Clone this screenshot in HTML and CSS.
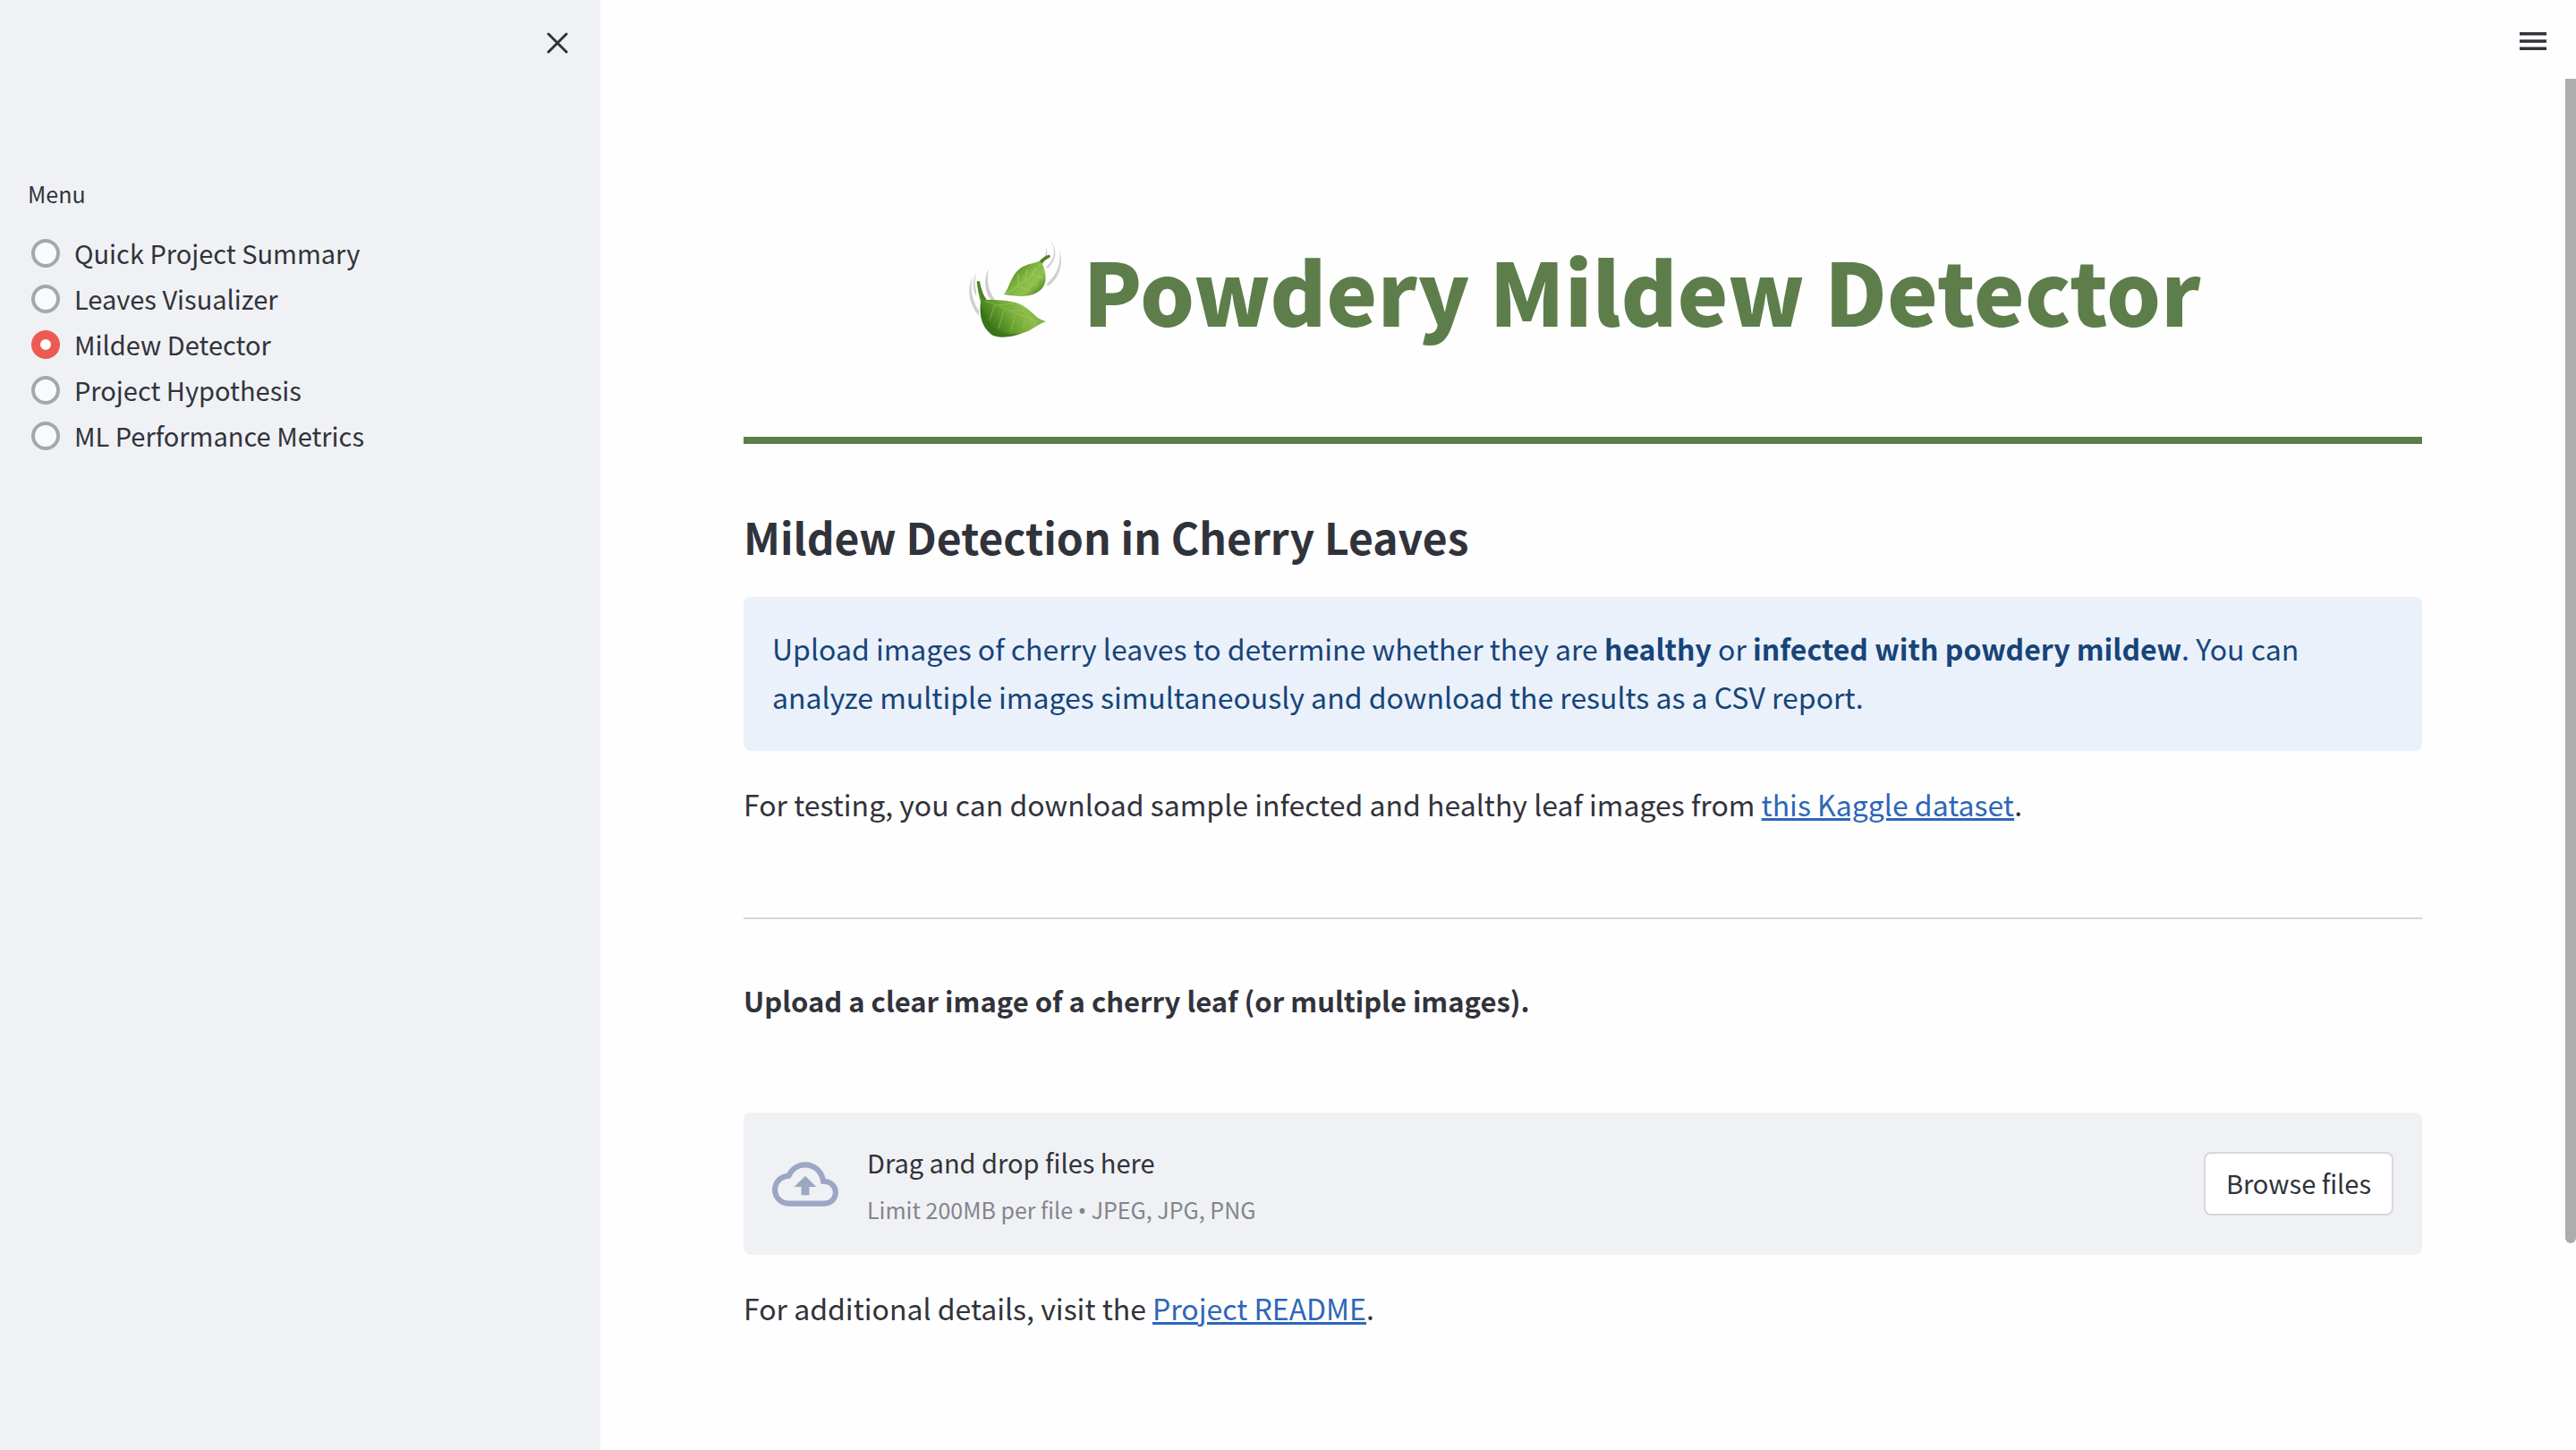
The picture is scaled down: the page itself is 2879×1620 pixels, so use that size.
FILE: index.html
```html
<!DOCTYPE html>
<html lang="en">
<head>
<meta charset="utf-8">
<title>Powdery Mildew Detector</title>
<link rel="stylesheet" href="styles.css">
</head>
<body>
<div class="app">
  <aside class="sidebar">
    <div class="sidebar-head">
      <button class="icon-button" type="button" aria-label="Close sidebar">
        <svg class="icon-close" viewBox="0 0 24 24" fill="none" stroke="currentColor" stroke-width="3" stroke-linecap="round"><path d="M2 2l20 20M22 2L2 22"/></svg>
      </button>
    </div>
    <fieldset class="menu">
      <legend class="menu-title">Menu</legend>
      <label class="option"><input class="radio" type="radio" name="page">Quick Project Summary</label>
      <label class="option"><input class="radio" type="radio" name="page">Leaves Visualizer</label>
      <label class="option"><input class="radio" type="radio" name="page" checked>Mildew Detector</label>
      <label class="option"><input class="radio" type="radio" name="page">Project Hypothesis</label>
      <label class="option"><input class="radio" type="radio" name="page">ML Performance Metrics</label>
    </fieldset>
  </aside>
  <div class="page">
    <header class="topbar">
      <button class="icon-button" type="button" aria-label="Main menu">
        <svg class="icon-menu" viewBox="0 0 30 20" fill="currentColor"><path d="M0 0h30v3.4H0zM0 8.3h30v3.4H0zM0 16.6h30V20H0z"/></svg>
      </button>
    </header>
    <main class="content">
      <h1 class="title">
        <svg class="leaf" viewBox="0 0 160 150" aria-hidden="true">
          <defs>
            <linearGradient id="leafLow" x1="0.1" y1="0.6" x2="0.8" y2="0.2">
              <stop offset="0" stop-color="#3f7a1c"/><stop offset="0.4" stop-color="#72a936"/><stop offset="0.7" stop-color="#8fbe4d"/><stop offset="1" stop-color="#5d9a2b"/>
            </linearGradient>
            <linearGradient id="leafHigh" x1="0.1" y1="0.1" x2="0.9" y2="0.8">
              <stop offset="0" stop-color="#36701a"/><stop offset="0.5" stop-color="#80b53f"/><stop offset="0.75" stop-color="#92c14e"/><stop offset="1" stop-color="#4a8722"/>
            </linearGradient>
          </defs>
          <g fill="#cfcfcf">
            <path d="M29 60C22 74 25 91 36 104L36 98C28 86 26 73 29 60z"/>
            <path d="M34 54C28 64 29 74 33 82L33 76C31 69 31 61 34 54z"/>
            <path d="M47 51C40 64 43 78 50 87L54 86C47 76 44 65 47 51z"/>
            <path d="M116 20C123 31 120 43 110 50L114 50C124 40 123 28 116 20z"/>
            <path d="M126 30C129 45 123 58 112 68L113 71C127 61 131 44 126 30z"/>
            <path d="M111 26C112 33 110 38 107 42L109 42C113 37 113 31 111 26z"/>
          </g>
          <path d="M64 80C70 73 72 58 82 51C90 45 98 46 105 42C108 39 112 37 116 36L116 38C112 40 109 43 107 46C111 54 113 67 106 74C95 85 78 82 64 80z" fill="url(#leafHigh)"/>
          <path d="M66 79C80 72 94 62 106 45M80 69L80 57M87 65L90 52M94 59L99 50M80 71L94 76M88 65L103 71M95 58L109 62" fill="none" stroke="#a5cc62" stroke-width="1.2" opacity="0.7"/>
          <path d="M34 65L37 65C38 73 41 83 45 86C68 86 80 88 89 95C97 101 103 109 111 110C102 113 96 120 85 123C73 128 56 130 49 124C40 116 36 105 38 88C36 80 34 73 34 65z" fill="url(#leafLow)"/>
          <path d="M42 87C60 91 78 105 108 111M54 91L48 108M64 97L58 118M76 103L72 121M88 107L86 118M58 92L75 90M70 98L87 98" fill="none" stroke="#a8cd63" stroke-width="1.2" opacity="0.45"/>
          <path d="M38 91C37 107 41 117 50 124C57 129 72 128 84 123C63 127 45 119 38 91z" fill="#356b18" opacity="0.55"/>
          <path d="M35 66C37 74 39 81 43 86M105 44C108 40 112 38 115 37" fill="none" stroke="#4d7d24" stroke-width="3"/>
        </svg>
        <span>Powdery Mildew Detector</span>
      </h1>
      <hr class="rule-thick">
      <h2 class="heading">Mildew Detection in Cherry Leaves</h2>
      <div class="info">
        <p class="text">Upload images of cherry leaves to determine whether they are <strong>healthy</strong> or <strong>infected with powdery mildew</strong>. You can analyze multiple images simultaneously and download the results as a CSV report.</p>
      </div>
      <p class="text">For testing, you can download sample infected and healthy leaf images from <a href="#dataset">this Kaggle dataset</a>.</p>
      <hr class="rule">
      <p class="prompt" id="upload-label">Upload a clear image of a cherry leaf (or multiple images).</p>
      <section class="uploader" aria-labelledby="upload-label">
        <svg class="icon-cloud" viewBox="0 4 24 16" fill="currentColor"><path d="M19.35 10.04A7.49 7.49 0 0012 4C9.11 4 6.6 5.64 5.35 8.04A5.994 5.994 0 000 14c0 3.31 2.69 6 6 6h13c2.76 0 5-2.24 5-5 0-2.64-2.05-4.78-4.65-4.96zM19 18H6c-2.21 0-4-1.79-4-4 0-2.05 1.53-3.76 3.56-3.97l1.07-.11.5-.95A5.469 5.469 0 0112 6c2.62 0 4.88 1.86 5.39 4.43l.3 1.5 1.53.11A2.98 2.98 0 0122 15c0 1.65-1.35 3-3 3zM8 13h2.55v3h2.9v-3H16l-4-4-4 4z"/></svg>
        <div class="drop">
          <span class="drop-title">Drag and drop files here</span>
          <span class="drop-hint">Limit 200MB per file <span class="bullet">•</span> JPEG, JPG, PNG</span>
        </div>
        <button class="browse" type="button">Browse files</button>
      </section>
      <p class="text">For additional details, visit the <a href="#readme">Project README</a>.</p>
    </main>
  </div>
  <div class="scroll-track" aria-hidden="true"><div class="scroll-thumb"></div></div>
</div>
</body>
</html>
```
FILE: styles.css
```css
* {
  box-sizing: border-box;
}

body {
  margin: 0;
  background: #fefefe;
  color: #31333b;
  font-family: "Noto Sans CJK SC", "Noto Sans", sans-serif;
  font-size: 32px;
  line-height: 54px;
}

.app {
  display: flex;
  min-height: 100vh;
}

.sidebar {
  flex: 0 0 671px;
  padding: 32px 32px 32px 31px;
  background: #f0f1f5;
}

.sidebar-head {
  display: flex;
  justify-content: flex-end;
  height: 159px;
  padding: 4px 4px 0 0;
}

.icon-button {
  display: flex;
  align-self: flex-start;
  padding: 0;
  border: 0;
  background: none;
  color: #31333b;
}

.icon-close {
  width: 24px;
  height: 24px;
}

.icon-menu {
  width: 30px;
  height: 20px;
}

.menu {
  margin: 0;
  padding: 0;
  border: 0;
}

.menu-title {
  padding: 0;
  margin-bottom: 16px;
  font-size: 25px;
  line-height: 50px;
}

.option {
  display: flex;
  align-items: center;
  gap: 16px;
  padding-left: 4px;
  font-size: 29px;
  line-height: 51px;
}

.radio {
  appearance: none;
  width: 32px;
  height: 32px;
  margin: 0;
  border: 4px solid #a5a7ab;
  border-radius: 50%;
  background: #f9fafc;
}

.radio:checked {
  border: 10px solid #ec5a53;
  background: #fff;
}

.page {
  flex: 1;
  min-width: 0;
}

.topbar {
  display: flex;
  justify-content: flex-end;
  height: 88px;
  padding: 36px 21px 0;
}

.content {
  padding: 156px 160px 80px;
}

.title {
  display: flex;
  align-items: center;
  justify-content: center;
  margin: 0;
  color: #5d7e4b;
  font-size: 96px;
  font-weight: 900;
  line-height: 160px;
}

.leaf {
  width: 160px;
  height: 150px;
  margin: 0 -8px 0 -20px;
}

.rule-thick {
  height: 8px;
  margin: 84px 0 62px;
  border: 0;
  background: #5d7e4b;
}

.heading {
  margin: 0 0 26px;
  font-size: 48px;
  font-weight: 700;
  line-height: 83px;
}

.info {
  margin-bottom: 32px;
  padding: 30px 32px 34px;
  border-radius: 8px;
  background: #eaf1fb;
  color: #174479;
}

.text {
  margin: 0;
}

a {
  color: #2e67b8;
  text-decoration: underline;
  text-decoration-thickness: 3px;
}

.rule {
  height: 2px;
  margin: 100px 0 64px;
  border: 0;
  background: #d6d6d9;
}

.prompt {
  margin: 0 0 98px;
  font-size: 31px;
  font-weight: 700;
}

.uploader {
  display: flex;
  align-items: center;
  gap: 32px;
  margin-bottom: 32px;
  padding: 32px;
  border-radius: 8px;
  background: #f0f1f5;
}

.icon-cloud {
  width: 74px;
  height: 50px;
  color: #9ba7c3;
}

.drop {
  display: flex;
  flex: 1;
  flex-direction: column;
  gap: 12px;
}

.drop-title {
  font-size: 29px;
  line-height: 47px;
}

.drop-hint {
  color: #83858b;
  font-size: 25px;
  line-height: 35px;
}

.bullet {
  font-family: "Noto Sans", sans-serif;
}

.browse {
  padding: 7px 23px 9px;
  border: 2px solid #d6d7da;
  border-radius: 8px;
  background: #fff;
  color: #31333b;
  font-family: inherit;
  font-size: 29px;
  line-height: 51px;
}

.scroll-track {
  flex: 0 0 12px;
  padding-top: 88px;
}

.scroll-thumb {
  height: 85vh;
  max-height: 1301px;
  border-radius: 0 0 6px 6px;
  background: #adadaf;
}
```
